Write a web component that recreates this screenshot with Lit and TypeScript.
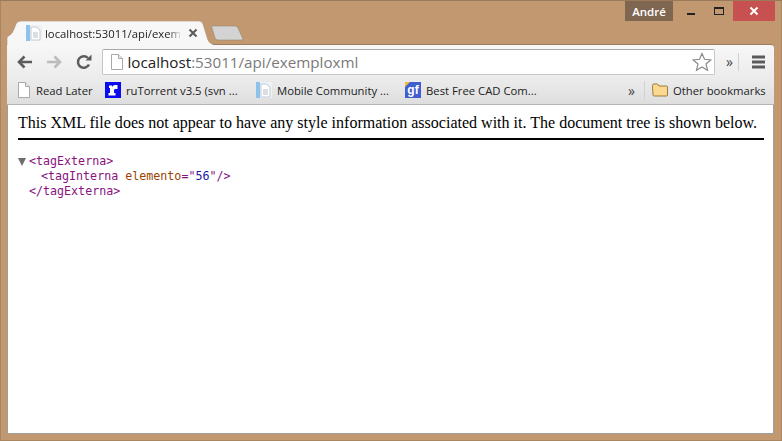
import { LitElement, html, css, svg } from "lit";
import { customElement } from "lit/decorators.js";

const pageIcon = svg`<svg class="ic" width="16" height="16" viewBox="0 0 16 16"><path d="M2.500 .5h7l4 4v11h-11z" fill="#fff" stroke="#a9a9a9"/><path d="M9.500 .5v4h4" fill="#e8e8e8" stroke="#a9a9a9"/></svg>`;
const aspIcon = svg`<svg class="ic" width="16" height="16" viewBox="0 0 16 16"><rect x="0" y="0" width="4" height="16" fill="#8cc3ea"/><rect x="4" y="0" width="12" height="16" fill="#eef1f5"/><path d="M5 2h5l4 3v10H5z" fill="#fff" stroke="#c3cbd4"/><path d="M7 8h5M7 10h5M7 12h5" stroke="#b5bec8"/></svg>`;

@customElement("app-root")
export class AppRoot extends LitElement {
  static styles = css`
    :host { display: block; width: 782px; height: 441px; overflow: hidden; position: relative; background: #c1986f; font-family: "Open Sans", "Noto Sans", sans-serif; box-sizing: border-box; border-top: 1px solid #9b7a5a; }
    .edge { position: absolute; inset: 0; border: 1px solid #a98560; border-top: 0; pointer-events: none; }
    .win { display: flex; flex-direction: column; height: 440px; padding: 0 8px 7px 7px; box-sizing: border-box; }
    .title { height: 20px; display: flex; justify-content: flex-end; flex: none; margin-right: -1px; }
    .user { width: 48px; height: 20px; background: #7f6650; color: #fff; font: 600 11.500px "Open Sans", sans-serif; display: flex; align-items: center; justify-content: center; margin-right: 4px; }
    .wbtn { width: 28px; height: 20px; display: flex; align-items: center; justify-content: center; }
    .wclose { width: 42px; height: 20px; background: #c75050; display: flex; align-items: center; justify-content: center; }
    .tabs { height: 24px; display: flex; flex: none; position: relative; z-index: 1; }
    .tabshape { position: absolute; left: 0; top: 0; }
    .tab { width: 205px; height: 24px; display: flex; align-items: center; padding-left: 19px; box-sizing: border-box; position: relative; font-size: 11.300px; color: #222; white-space: nowrap; }
    .tabtxt { width: 137px; overflow: hidden; margin-left: 3px; -webkit-mask-image: linear-gradient(90deg, #000 90%, transparent); mask-image: linear-gradient(90deg, #000 90%, transparent); }
    .tabx { margin-left: 6px; display: flex; }
    .chrome { display: flex; align-items: center; height: 33px; flex: none; border-radius: 0 3px 0 0; position: relative; background: linear-gradient(#f7f7f7, #ececec); box-shadow: 0 -1px #9b7c5d; }
    .nav { width: 29.500px; display: flex; justify-content: center; flex: none; }
    .nav.first { margin-left: 3px; }
    .omni { margin-left: 3px; width: 613px; height: 26px; box-sizing: border-box; background: #fff; border: 1px solid #c6c6c6; border-top-color: #a8a8a8; border-radius: 2px; display: flex; align-items: center; padding: 0 2px 0 6px; font-size: 15.200px; color: #7a7a7a; flex: none; }
    .omni b { font-weight: 400; color: #222; }
    .url { margin-left: 3px; flex: 1; white-space: nowrap; }
    .more { font-size: 14px; color: #444; width: 23px; padding-left: 7px; box-sizing: border-box; text-align: center; flex: none; }
    .menu { flex: none; padding-left: 12px; border-left: 1px solid #d0d0d0; height: 18px; display: flex; align-items: center; }
    .marks { height: 27px; flex: none; display: flex; align-items: center; padding-bottom: 2px; background: linear-gradient(#ececec, #dedede); border-bottom: 1px solid #b4b4b4; box-sizing: border-box; font-size: 11.300px; color: #222; padding-left: 9px; white-space: nowrap; }
    .mark { display: flex; align-items: center; gap: 5px; flex: none; }
    .ic { flex: none; display: block; }
    .m1 { width: 89px; }
    .m1 span { margin-left: -1px; }
    .m2 { width: 151px; }
    .m3 { width: 149px; }
    .m4 { width: 223px; }
    .rmore { width: 16px; flex: none; color: #444; font-size: 14px; }
    .sep { width: 1px; height: 18px; background: #cfd3d8; flex: none; margin-right: 7px; }
    .page { flex: 1; background: #fff; border: 1px solid #9e9e9e; border-width: 0 1px 1px 1px; padding: 9px 9px 0 10px; min-height: 0; }
    .warn { font: 16px/18px "Liberation Serif", serif; letter-spacing: 0.01px; color: #000; white-space: nowrap; padding-bottom: 6px; border-bottom: 2px solid #000; }
    .tree { font: 11.670px/15px "DejaVu Sans Mono", monospace; margin-top: 14px; position: relative; color: #881280; }
    .row { padding-left: 11px; white-space: pre; }
    .row.in { padding-left: 23px; }
    .arrow { position: absolute; left: 0; top: 4px; width: 0; height: 0; border-left: 4px solid transparent; border-right: 4px solid transparent; border-top: 8px solid #6e6e6e; }
    .attr { color: #994500; }
    .val { color: #1a1aa6; }
  `;

  render() {
    return html`
      <div class="win">
        <div class="title">
          <div class="user">André</div>
          <div class="wbtn"><svg width="10" height="10" viewBox="0 0 10 10"><rect x="1" y="7" width="8" height="2" fill="#222"/></svg></div>
          <div class="wbtn"><svg width="12" height="10" viewBox="0 0 12 10"><rect x="1.500" y="1.500" width="9" height="7" fill="none" stroke="#222"/><rect x="1" y="1" width="10" height="2" fill="#222"/></svg></div>
          <div class="wclose"><svg width="10" height="10" viewBox="0 0 10 10"><path d="M1.500 1.500l7 7M8.500 1.500l-7 7" stroke="#fff" stroke-width="2"/></svg></div>
        </div>
        <div class="tabs">
          <svg class="tabshape" width="240" height="24" viewBox="0 0 240 24">
            <path d="M205 5H228Q230 5 231 7L236 18Q236 19 234 19H211Q209 19 208 17L205 7Q204 5 205 5Z" fill="#d3d3d3" stroke="#98866f" stroke-width=".6"/>
            <path d="M0 25V17Q0 15 3 14Q5 13 7 8L9 3Q10 0 14 0H192Q195 0 196 3L201 19Q202 22 207 24V25Z" fill="#f7f7f7" stroke="#a78a6c" stroke-width=".6"/>
          </svg>
          <div class="tab">
            ${aspIcon}
            <div class="tabtxt">localhost:53011/api/exem</div>
            <div class="tabx"><svg width="10" height="10" viewBox="0 0 10 10"><path d="M1.500 1.500l7 7M8.500 1.500l-7 7" stroke="#5a5a5a" stroke-width="2"/></svg></div>
          </div>
        </div>
        <div class="chrome">
          <div class="nav first"><svg width="16" height="14" viewBox="0 0 16 14"><path d="M7.500 1.500L2 7l5.500 5.500M2.500 7H15" fill="none" stroke="#5c5c5c" stroke-width="2.600"/></svg></div>
          <div class="nav"><svg width="16" height="14" viewBox="0 0 16 14"><path d="M8.500 1.500L14 7l-5.500 5.500M13.500 7H1" fill="none" stroke="#bcbcbc" stroke-width="2.600"/></svg></div>
          <div class="nav"><svg width="16" height="16" viewBox="0 0 16 16"><path d="M13 10.500A5.800 5.800 0 1 1 12 4" fill="none" stroke="#5c5c5c" stroke-width="2.500"/><path d="M9.500 6.500H15.500V.5z" fill="#5c5c5c"/></svg></div>
          <div class="omni">
            ${pageIcon}
            <div class="url"><b>localhost</b>:53011/api/exemploxml</div>
            <svg width="20" height="20" viewBox="0 0 20 20"><path d="M10 1.500l2.500 5.800 6.300.6-4.800 4.100 1.500 6.200L10 15l-5.500 3.200L6 12 1.200 7.900l6.300-.6z" fill="#fff" stroke="#8a8a8a" stroke-width="1.200"/></svg>
          </div>
          <div class="more">»</div>
          <div class="menu"><svg width="15" height="14" viewBox="0 0 15 14"><path d="M1 2h13M1 7h13M1 12h13" stroke="#5a5a5a" stroke-width="2.800"/></svg></div>
        </div>
        <div class="marks">
          <div class="mark m1">${pageIcon}<span>Read Later</span></div>
          <div class="mark m2"><svg class="ic" width="16" height="16" viewBox="0 0 16 16"><rect width="16" height="16" fill="#0b0bf0"/><path d="M4 3.500h3v1.500q1-2 3-2h2.500v4H10q-1 0-1 1.500V11h1.500v2.500H3.500V11H5V6H4z" fill="#fff"/></svg><span>ruTorrent v3.5 (svn ...</span></div>
          <div class="mark m3">${aspIcon}<span>Mobile Community ...</span></div>
          <div class="mark m4"><svg class="ic" width="16" height="16" viewBox="0 0 16 16"><rect width="16" height="16" fill="#3f5fd0"/><path d="M0 0h5L0 5z" fill="#f5b642"/><text x="8" y="12" text-anchor="middle" font-family="Liberation Sans" font-weight="700" font-size="12" fill="#fff">gf</text></svg><span>Best Free CAD Com...</span></div>
          <div class="rmore">»</div>
          <div class="sep"></div>
          <div class="mark"><svg class="ic" width="16" height="14" viewBox="0 0 16 14"><path d="M.5 2.500q0-1.500 1.500-1.500h3.500l1.500 2h7.500q1 0 1 1v8q0 1-1 1h-12q-1.500 0-1.500-1z" fill="#fcd990" stroke="#9c7a3c"/></svg><span>Other bookmarks</span></div>
        </div>
        <div class="page">
          <div class="warn">This XML file does not appear to have any style information associated with it. The document tree is shown below.</div>
          <div class="tree">
            <div class="arrow"></div>
            <div class="row">&lt;tagExterna&gt;</div>
            <div class="row in">&lt;tagInterna <span class="attr">elemento</span>="<span class="val">56</span>"/&gt;</div>
            <div class="row">&lt;/tagExterna&gt;</div>
          </div>
        </div>
      </div>
      <div class="edge"></div>
    `;
  }
}
